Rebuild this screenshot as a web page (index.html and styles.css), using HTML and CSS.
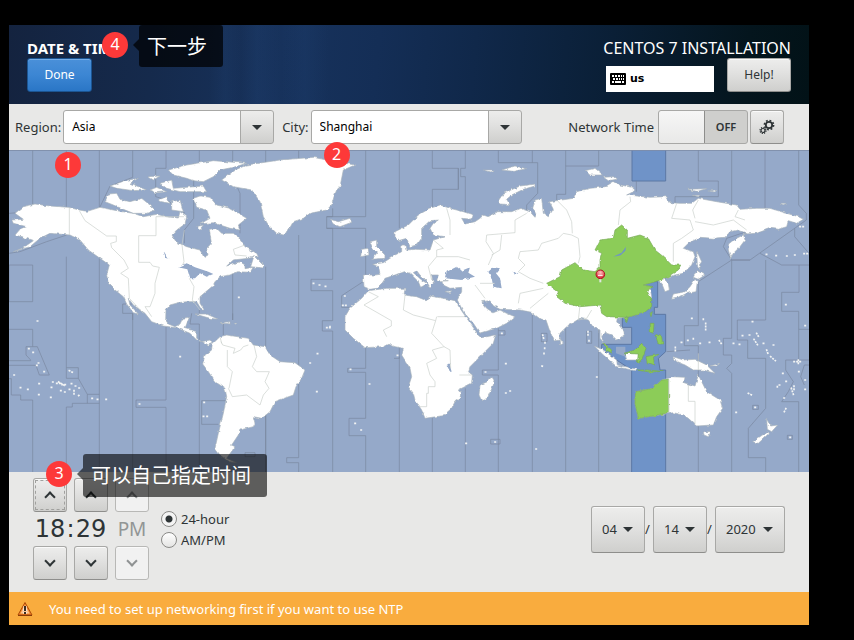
FILE: index.html
```html
<!DOCTYPE html>
<html lang="en">
<head>
<meta charset="utf-8">
<meta name="viewport" content="width=device-width, initial-scale=1">
<title>Date &amp; Time</title>
<link rel="stylesheet" href="styles.css">
</head>
<body>
<main class="installer">
  <header class="header">
    <div class="header-side">
      <h1 class="title">DATE &amp; TIME</h1>
      <button class="btn btn-primary" type="button">Done</button>
    </div>
    <div class="header-side header-right">
      <p class="product">CENTOS 7 INSTALLATION</p>
      <div class="header-actions">
        <div class="keyboard">
          <svg class="keyboard-icon" viewBox="0 0 16 12" aria-hidden="true">
            <rect width="16" height="12" rx="1"/>
            <path d="M2 2h2v2H2zM5 2h2v2H5zM8 2h2v2H8zM11 2h1v2h-1zM13 2h1v2h-1zM3 5h2v2H3zM6 5h2v2H6zM9 5h1v2H9zM11 5h1v2h-1zM13 5h1v2h-1zM2 8h2v2H2zM5 8h6v2H5zM12 8h2v2h-2z" fill="#fff"/>
          </svg>
          <span>us</span>
        </div>
        <button class="btn" type="button">Help!</button>
      </div>
    </div>
    <div class="hint hint-next"><span class="badge">4</span><span class="tip">下一步</span></div>
  </header>

  <section class="toolbar">
    <label for="region">Region:</label>
    <div class="combo">
      <select id="region"><option>Asia</option></select>
      <span class="badge badge-region">1</span>
    </div>
    <label for="city">City:</label>
    <div class="combo">
      <select id="city"><option>Shanghai</option></select>
      <span class="badge badge-city">2</span>
    </div>
    <label class="network-label" for="ntp">Network Time</label>
    <div class="switch"><input id="ntp" type="checkbox" role="switch"><span>OFF</span></div>
    <button class="btn btn-square" type="button" aria-label="Configure NTP">
      <svg viewBox="0 0 16 16" width="16" height="16" aria-hidden="true" fill="none" stroke="#2e3436">
        <circle cx="10" cy="6" r="3.2" stroke-width="1.8"/>
        <circle cx="10" cy="6" r="4.6" stroke-width="1.6" stroke-dasharray="1.8 1.8"/>
        <circle cx="4" cy="11.500" r="2" stroke-width="1.2"/>
        <circle cx="4" cy="11.500" r="3" stroke-width="1.2" stroke-dasharray="1.2 1.150"/>
      </svg>
    </button>
  </section>

  <svg class="map" viewBox="27 0 2400 966" role="img" aria-label="Time zone map">
    <defs>
      <filter id="coast" filterUnits="userSpaceOnUse" x="0" y="0" width="2460" height="966" color-interpolation-filters="sRGB">
        <feTurbulence type="fractalNoise" baseFrequency="0.07" numOctaves="2" seed="4"/>
        <feDisplacementMap in="SourceGraphic" scale="9" xChannelSelector="R" yChannelSelector="G"/>
      </filter>
      <radialGradient id="pin" cx=".5" cy=".3" r=".6"><stop offset="0" stop-color="#ffc0c0"/><stop offset="1" stop-color="#dd3440"/></radialGradient>
    </defs>
    <rect x="27" width="2400" height="966" fill="#95a9c9"/>

    <!-- highlighted zone -->
    <g fill="#6f93c8" stroke="#5d78a4" stroke-width="3">
      <path d="M1896 -5H1997V93H1896Z"/>
      <path d="M1997 970V660H1980L1975 625 1997 605V493H1963V472H1973V395H1900L1867 500V532H1895V583H1805V600L1895 660V970Z"/>
    </g>
    <path d="M1848 610V590H1876V620Z" fill="#95a9c9"/>

    <!-- zone boundaries -->
    <g class="zones">
      <path d="M98 0V185L27 190M27 310L60 305 140 275 200 255M199 0V255M298 0V175L330 108 398 82V0M498 0V55H467V140L500 150 555 190M598 0V60M581 40V205L553 240V280M698 0V45M698 80L720 130V250M797 0V45M698 370V510M797 350V966M896 0V30M896 255V923H860V938H896V966M998 175V200H980V235H998V388H933V422H998V512H967V543H998V966"/>
      <path d="M98 345H27V455H98ZM27 538H98V590H78V615L92 630V632H27M27 646H108L118 675H148L112 590H98M27 686H34V735H62V750H98V966M199 320V653H235V685L262 733H298V325M199 653V685H235M262 733V760H217V771H199V966M298 733V966M262 760H298M398 462H368V490H398V966M398 490V510M498 530V750H408V772H498V966M598 522V570M598 522L570 522 575 490M598 490V480M598 575V966M605 752H680M605 752V823H655M698 510V490M670 520V555M735 908H765V920H735ZM797 760V966"/>
      <path d="M1097 0V200H980M1097 235H980M1097 235V390L1025 437V472H1060M1198 0V235M1297 0V55H1375V118H1297V175M1396 0V55H1382V80H1396V205M1375 55V118M1495 0V38H1613V130L1580 165V190M1597 0V38M1697 0V48H1796V0M1697 48V133H1670V150M1909 93V125M2095 0V93H2155V140H2025V160M2195 0V165M2295 0V180M2396 0V165L2419 190V210L2250 330H2195L2170 290 2180 265 2240 245M2384 235V260L2427 310M2280 310L2345 345H2427M2397 345V427H2345V484H2396V538H2427M2250 330L2195 330 2095 395 2095 505"/>
      <path d="M1097 590V655H1043V667H1097V805H1047V857H1097V966M1198 590V625H1182M1198 620V966M1297 800V966M1396 715V966M1495 535V555H1515V542H1495M1495 555V660H1447V675H1495V966M1472 868H1500V882H1472ZM1597 480V966M1624 550H1641V575H1624ZM1697 530V966M1760 544H1775V580H1760ZM1796 530V966M2095 505V527H2053V587H2095V966M2195 330V565H2170V615H2195V640L2180 655 2195 670V966M2297 330V510H2212V570H2243V625H2297V775L2245 835V923H2297V966M2396 538V630H2357V660L2380 695 2365 725 2345 755H2396V966M2396 630L2427 630M2427 645H2413L2402 680 2413 705M2258 766H2275V778H2258ZM2362 856H2377V868H2362ZM2000 605 2070 600"/>
    </g>

    <!-- land -->
    <g class="land" filter="url(#coast)">
      <!-- North and Central America -->
      <path d="M105 162L150 168 205 172 238 180 262 184 300 172 355 183 400 190 430 200 470 193 500 200 535 204 540 185 560 200 555 222 530 240 516 255 528 275 560 290 600 300 612 322 624 315 620 295 634 280 632 262 628 238 650 235 665 250 700 250 715 262 735 290 770 310 775 320 745 325 700 330 680 348 720 335 735 345 735 356 760 352 750 367 710 365 690 375 660 380 645 395 638 408 612 430 600 440 600 460 613 480 605 480 590 455 560 455 535 458 510 465 498 480 497 510 505 522 525 530 540 522 548 505 568 502 560 522 555 535 590 545 590 565 605 575 630 570 637 580 625 585 610 577 590 570 570 550 530 533 490 528 455 515 435 490 400 465 385 445 390 465 415 492 400 488 380 462 370 440 345 420 325 400 320 375 328 345 300 325 265 300 240 270 210 255 150 250 120 265 90 290 40 305 70 293 100 272 70 262 45 255 60 238 80 230 40 220 35 210 70 208 45 190 70 170Z"/>
      <!-- Arctic islands -->
      <path d="M330 108L375 92 415 85 390 100 440 120 400 122 350 115ZM315 155L325 132 350 130 360 148 390 155 425 145 450 165 465 180 440 190 400 190 370 178 340 165ZM445 80L480 78 460 90ZM450 120L470 112 500 125 470 128ZM505 60L560 45 640 32 740 40 700 52 660 60 640 80 610 95 580 92 560 85 520 75ZM480 100L515 90 520 115 610 108 620 125 540 125 500 115ZM475 150L500 140 510 160 485 155ZM515 155L540 150 550 185 515 180ZM580 145L600 138 630 142 650 165 690 175 740 205 715 225 720 240 690 235 640 218 600 222 630 205 620 180 590 172ZM590 230L610 225 600 238ZM752 350L762 318 792 348 790 354Z"/>
      <!-- Greenland and Iceland -->
      <path d="M665 90L705 60 740 45 840 30 940 22 980 30 1065 45 1030 60 1020 110 1010 120 1002 140 995 165 980 180 930 190 910 205 880 215 860 250 850 255 830 250 805 225 790 200 780 155 755 120 700 110ZM990 208L1015 215 1050 205 1055 217 1020 230 1000 222Z"/>
      <!-- South America -->
      <path d="M637 582L660 560 680 555 745 565 760 585 795 590 810 615 840 635 885 638 915 660 905 685 888 710 880 735 825 755 810 785 785 805 760 800 765 820 760 830 720 840 715 855 695 885 705 890 680 925 710 938 685 935 660 915 645 895 655 850 670 790 680 740 675 715 645 695 625 665 608 642 615 615 635 600Z"/>
      <path d="M585 492L620 492 655 508 630 505ZM660 518L690 515 690 522ZM703 520L710 520 708 524Z"/>
      <!-- Africa and Madagascar -->
      <path d="M1215 415L1212 435 1250 440 1280 452 1290 438 1330 445 1365 452 1390 490 1415 525 1435 555 1440 564 1487 555 1480 580 1450 610 1410 650 1405 665 1417 675 1415 700 1375 720 1382 730 1380 745 1365 755 1355 775 1330 797 1275 805 1265 780 1245 750 1240 730 1225 710 1235 680 1230 655 1205 615 1210 595 1185 590 1165 582 1150 590 1095 593 1060 565 1035 540 1035 500 1050 475 1085 445 1105 422 1160 415ZM1475 680L1482 690 1480 705 1462 745 1445 752 1437 735 1440 705 1462 695Z"/>
      <!-- Eurasia -->
      <path d="M1185 245L1225 225 1255 195 1290 175 1320 165 1350 175 1390 185 1420 195 1415 208 1385 205 1395 222 1425 215 1440 205 1450 195 1465 200 1490 185 1535 185 1560 175 1590 185 1605 202 1610 190 1598 175 1605 150 1625 145 1630 190 1645 200 1660 178 1648 155 1685 150 1720 145 1730 125 1770 115 1815 110 1840 95 1860 105 1900 112 1900 125 1880 135 1950 142 2000 140 2010 158 2040 160 2075 160 2095 145 2150 155 2210 165 2220 178 2270 175 2310 175 2360 190 2395 200 2410 208 2390 220 2365 212 2360 230 2335 238 2310 235 2270 250 2230 252 2235 270 2220 290 2200 310 2192 325 2185 300 2185 285 2210 265 2240 250 2215 240 2190 245 2175 262 2140 265 2100 262 2065 280 2050 295 2080 305 2085 320 2075 345 2050 370 2025 375 1990 385 2005 400 2008 420 1995 425 1985 400 1975 390 1930 405 1950 410 1955 440 1950 470 1930 490 1885 500 1852 505 1850 515 1872 545 1873 555 1850 570 1835 555 1815 548 1805 560 1815 585 1835 605 1820 587 1800 565 1800 540 1780 532 1765 510 1740 505 1700 530 1680 550 1678 570 1663 573 1650 545 1638 510 1618 505 1595 487 1560 480 1500 478 1480 467 1470 452 1445 455 1460 475 1480 488 1500 480 1520 490 1545 500 1520 520 1490 535 1440 550 1420 520 1390 485 1372 450 1385 425 1385 412 1350 415 1330 405 1325 393 1345 392 1310 392 1315 375 1295 375 1300 400 1290 412 1280 395 1260 375 1250 362 1240 368 1265 390 1280 400 1275 405 1262 412 1255 395 1230 370 1210 365 1185 375 1155 385 1145 400 1130 415 1110 418 1092 410 1090 375 1125 375 1140 373 1135 350 1118 343 1150 338 1185 315 1205 305 1205 285 1215 285 1218 300 1250 298 1290 300 1300 270 1335 260 1300 255 1290 235 1300 220 1315 210 1290 212 1265 235 1265 265 1250 285 1230 290 1220 265 1195 272 1185 262Z"/>
      <!-- Atlantic and Arctic islands of Eurasia -->
      <path d="M1110 275L1130 270 1130 290 1155 315 1155 325 1115 328 1130 310 1118 295ZM1085 298L1105 295 1107 315 1082 320ZM1493 155L1510 130 1560 108 1605 102 1605 108 1570 118 1535 135 1520 148 1530 164 1500 162ZM1450 60L1480 60 1470 66ZM1505 60L1545 48 1580 56 1540 64ZM1755 62L1785 55 1810 75 1770 75ZM1810 82L1840 80 1850 88 1825 92ZM2060 118L2120 116 2090 124ZM2125 122L2150 122 2140 126ZM2080 136L2100 136 2095 140ZM2340 160L2360 160 2350 164ZM1335 425L1355 422 1350 428Z"/>
      <!-- Japan, Sakhalin, Sri Lanka -->
      <path d="M2090 302L2105 335 2098 345 2100 360 2092 345ZM2085 370L2095 362 2115 375 2095 388 2080 382ZM2085 388L2092 395 2088 425 2060 430 2040 440 2015 445 2020 432 2055 425 2070 410ZM1680 565L1690 580 1682 585Z"/>
      <!-- Sumatra, Java, Borneo, New Guinea -->
      <path d="M1783 588L1810 600 1850 630 1852 645 1910 658 1905 662 1850 650 1810 615ZM1875 610L1915 610 1915 630 1880 630ZM2020 620L2050 630 2085 628 2120 645 2145 670 2110 660 2080 660 2055 645 2030 635ZM2130 648L2160 640 2150 648Z"/>
      <!-- Australia, Tasmania, New Zealand -->
      <path d="M1907 725L1960 715 1985 690 2005 685 2015 680 2055 682 2052 698 2085 708 2095 675 2110 705 2120 725 2160 750 2168 775 2150 800 2140 825 2090 828 2065 805 2050 795 2020 788 1960 798 1915 805 1905 760ZM2110 845L2133 845 2125 860 2112 855ZM2300 808L2312 828 2333 825 2315 845 2302 838ZM2302 845L2305 852 2275 880 2258 875Z"/>
    </g>

    <!-- inland waters -->
    <g fill="#95a9c9" filter="url(#coast)">
      <path d="M535 352L560 340 585 352 625 365 640 372 620 380 600 370 585 385 570 385 562 358ZM490 302L505 325 498 325ZM1335 385L1340 365 1370 350 1385 362 1410 352 1405 368 1425 380 1385 390ZM1465 365L1480 352 1500 355 1488 370 1500 385 1505 415 1480 410 1475 385ZM1340 645L1350 665 1355 665 1348 640ZM1540 365L1555 370 1545 375Z"/>
    </g>

    <!-- green zone -->
    <g class="green" filter="url(#coast)">
      <path d="M1640 400L1680 380 1685 360 1725 338 1750 360 1785 365 1800 350 1800 330 1805 310 1785 300 1800 270 1840 265 1845 240 1865 225 1882 240 1882 265 1920 255 1945 265 1965 300 1990 320 2015 345 2042 345 2035 360 1995 385 1965 395 1930 405 1960 410 1940 420 1955 450 1955 470 1930 490 1880 502 1820 500 1805 490 1800 465 1740 470 1695 460 1670 440 1675 425Z"/>
      <path d="M1907 725L1960 715 1985 690 2006 688V788L1960 798 1915 805 1905 760ZM1872 610L1905 600 1925 580 1938 595 1925 630 1912 638 1915 612ZM1812 580L1835 600 1838 610 1818 600ZM1948 520L1962 520 1960 550 1948 545ZM1965 552L1985 560 1988 582 1975 582ZM1938 620L1980 612 1960 625 1965 645 1950 640 1942 642ZM1910 660L1940 660 1990 664 1950 666ZM1950 490L1957 485 1953 500ZM1870 508L1885 502 1880 518Z"/>
    </g>
    <path d="M1840 320L1865 308 1878 290 1876 302 1862 316Z" fill="#6f93c8"/>

    <!-- inland boundaries -->
    <g class="borders">
      <path d="M208 173V255M238 182L255 212 320 258H349V275L332 280 335 293 372 330 385 355 362 370 385 385 388 445 430 490M552 200H468V257H416V337H450L458 348 478 352 465 400V430L450 470 435 470 455 500M553 240L546 285 552 335 548 345M568 385L582 410 577 450 600 480M735 285L700 298 705 315 740 318M663 575L668 585 705 595 700 610 722 600 730 590 745 585M682 600V650L697 665 687 715M685 715L697 740 740 735 780 765 790 735 807 715 795 695 808 665H770L757 650 770 620 762 585M660 560L665 580"/>
      <path d="M1105 425L1135 440 1092 465 1174 512V528L1150 540 1160 560M1215 435L1210 480 1240 495 1307 512 1295 550 1332 590 1297 600 1310 625 1280 640 1290 675 1305 695V710H1285V730H1280V770H1260M1312 500H1395M1332 590L1350 600 1352 655M1307 512L1310 500M1378 675H1415M1425 405L1455 445M1440 400L1485 400M1310 300V320L1285 350 1295 390M1310 320L1375 320 1410 330M1300 270L1330 295 1310 300M1340 175L1350 210 1350 255M1580 190L1545 210V248L1460 255 1458 275 1480 310 1465 345M1505 255L1500 300 1475 315M1560 305L1615 300 1625 280 1675 265 1690 250 1715 255 1735 265 1740 320 1735 340M1560 305L1555 325 1575 345 1555 365 1590 385 1630 400M1555 460L1560 430 1630 415M1590 475L1620 450 1645 430M1670 150L1700 180 1715 215 1717 250M1890 140L1892 155 1860 180 1855 225M2030 160L2015 205 2070 210 2080 240 2045 265 2020 280 2020 335M2095 150L2078 180 2085 205M2085 215L2140 225 2200 210 2240 240M2215 180L2205 200 2235 210M1740 465L1735 510 1760 505 1775 480M2006 688V788M2065 705V754H2085V825M2095 610V660"/>
    </g>

    <!-- small islands -->
    <path class="specks" d="M86 596h1M99 607h1M115 639h1M110 646h1M132 665h1M42 675h4M61 713h1M83 718h1M117 701h4M116 734h1M152 742h1M208 662l12 6M154 712h4M158 696l8 0M170 700l14 0M176 696l20 12M186 704h16M182 722h1M194 726h1M208 718h1M214 701h1M226 708h1M222 722v12M237 714h1M236 737l6 -6M276 745h1M292 748h1M318 748h1M418 762h1M540 620h1M612 757h4M610 799h1M621 799h1M112 513h1M716 442h1M930 639h1M952 611h1M950 725h4M940 400h1M958 405h1M976 409h1M980 533h10M990 530v6M1034 438h1M1028 466h18M1192 616h1M1051 658h1M1108 702h1M1065 820h1M1083 840h1M1398 880h1M1485 876h1M1456 666h1M1517 641h1M1517 729h1M1530 723h1M1505 550h1M1628 555l4 14M1635 578v8M1634 594v8M1632 610v8M1626 648l8 3M1764 545v12M1767 572v8M1608 897h5M1790 681h1M2026 592v12M2044 577h1M2063 571h8M2080 566v8M2075 505h1M2110 507v8M2117 520v20M2100 580h4M2128 577h6M2158 572l8 12M2200 580h1M2218 583h1M2257 515h1M2227 557h1M2248 555h4M2270 550l8 14M2262 568l14 22M2290 580h1M2320 585h8M2300 600l5 14M2312 620l14 12M2382 635h24M2395 630v10M2396 665l6 0M2348 670h6M2332 710v8M2338 705h1M2358 694h1M2352 744h1M2382 708v15M2374 715l6 18M2415 690h1M2415 718h1M2353 785l6 -12M2208 787h1M2265 772h1M2370 862h1M2357 464h9M2415 527h1M2299 313h4M2328 317h4M2360 318h4M2384 315h6M2412 311h12M2245 730l10 5M2400 230h12"/>

    <!-- location pin -->
    <path d="M1801 385V397" stroke="#dfe5df" stroke-width="6"/>
    <circle cx="1801" cy="373" r="13" fill="url(#pin)" stroke="#ab1824" stroke-width="3"/>
    <path d="M1794 376h14" stroke="#fff" stroke-width="3"/>
    <path d="M27 1H2427" stroke="#7d8ca8" stroke-width="3"/>
  </svg>

  <section class="panel">
    <div class="clock">
      <button class="btn btn-square btn-focus" type="button" aria-label="Hour up"><i class="chev chev-up"></i></button>
      <button class="btn btn-square col-min" type="button" aria-label="Minute up"><i class="chev chev-up"></i></button>
      <button class="btn btn-square col-ampm" type="button" disabled aria-label="AM/PM up"><i class="chev chev-up"></i></button>
      <span class="digits">18</span>
      <span class="digits">:</span>
      <span class="digits">29</span>
      <span class="ampm">PM</span>
      <button class="btn btn-square" type="button" aria-label="Hour down"><i class="chev"></i></button>
      <button class="btn btn-square col-min" type="button" aria-label="Minute down"><i class="chev"></i></button>
      <button class="btn btn-square col-ampm" type="button" disabled aria-label="AM/PM down"><i class="chev"></i></button>
      <div class="hint hint-time"><span class="badge">3</span><span class="tip">可以自己指定时间</span></div>
    </div>
    <div class="formats">
      <label><input type="radio" name="format" checked>24-hour</label>
      <label><input type="radio" name="format">AM/PM</label>
    </div>
    <div class="date">
      <div class="pick"><select aria-label="Month"><option>04</option></select></div>
      <span>/</span>
      <div class="pick"><select aria-label="Day"><option>14</option></select></div>
      <span>/</span>
      <div class="pick pick-year"><select aria-label="Year"><option>2020</option></select></div>
    </div>
  </section>

  <footer class="warning">
    <svg viewBox="0 0 16 16" width="16" height="16" aria-hidden="true">
      <path d="M8 1.500L15 14H1Z" fill="#f68a2c" stroke="#ad4a08" stroke-linejoin="round"/>
      <path d="M1 14.500H15" stroke="#8a3b05"/>
      <path d="M8 4L12.500 12.500H3.500Z" fill="#fbc694"/>
      <path d="M8 5V10M8 11V13" stroke="#fff" stroke-width="3"/>
      <path d="M8 5V10M8 11V13" stroke="#3a2c20" stroke-width="2"/>
    </svg>
    <span>You need to set up networking first if you want to use NTP</span>
  </footer>
</main>
</body>
</html>
```
FILE: styles.css
```css
* { box-sizing: border-box; }

body {
  margin: 0;
  background: #000;
  color: #2e3436;
  font: 13px/20px "Noto Sans", "Noto Sans CJK SC", sans-serif;
}

button, select, input { font: inherit; color: inherit; margin: 0; }

.installer {
  margin: 25px 45px 15px 9px;
  background: #e8e8e7;
}

/* Header */
.header {
  position: relative;
  display: flex;
  justify-content: space-between;
  padding: 13px 18px 12px;
  color: #fff;
  background:
    linear-gradient(90deg, transparent 25%, rgba(45, 90, 150, .1) 27%, transparent 29%, rgba(45, 90, 150, .12) 31%, transparent 34%, rgba(45, 90, 150, .1) 37%, transparent 40%),
    linear-gradient(95deg, #14233f 0%, #152a4c 18%, #17325c 34%, #142e56 46%, #10284a 58%, #0a1f36 75%, #04151d 92%, #021217 100%);
}

.header-side { display: flex; flex-direction: column; align-items: flex-start; }
.header-right { align-items: flex-end; }
.title, .product { margin: 0; line-height: 20px; }
.title { font-size: 15px; font-weight: 700; }
.product { font-size: 16px; }
.header-actions { display: flex; align-items: flex-end; gap: 13px; }

.keyboard {
  display: flex;
  align-items: center;
  gap: 4px;
  width: 108px;
  height: 26px;
  padding: 0 4px;
  background: #fff;
  color: #000;
  font: 700 11px/16px "DejaVu Sans", sans-serif;
}
.keyboard-icon { width: 16px; height: 12px; }

/* Buttons */
.btn {
  display: inline-flex;
  align-items: center;
  justify-content: center;
  width: 64px;
  height: 34px;
  padding: 0;
  border: 1px solid #a8a8a6;
  border-bottom-color: #8e8e8c;
  border-radius: 3px;
  background: linear-gradient(#ededec, #e2e2e1 40%, #cfcfcd);
  box-shadow: inset 0 1px #fafafa;
  color: #2e3436;
  font-size: 12px;
}
.btn-primary {
  width: 65px;
  border-color: #1c5592;
  background: linear-gradient(#4a90d9, #3c86d3 50%, #2a76c6);
  box-shadow: inset 0 1px #76ace6;
  color: #fff;
}
.btn-square { position: relative; width: 34px; }
.btn:disabled { border-color: #b8b8b6; background: #f1f1f1; color: #8f9293; }
.btn-focus::after {
  content: "";
  position: absolute;
  inset: 1px;
  border: 1px dashed #a0a09e;
}

/* Toolbar */
.toolbar {
  display: flex;
  align-items: center;
  padding: 6px 25px 6px 6px;
}
.combo { position: relative; flex: 0 1 211px; margin: 0 8px 0 2px; }
.combo select {
  display: block;
  width: 100%;
  height: 34px;
  padding: 0 40px 0 8px;
  appearance: none;
  border: 1px solid #a8a8a6;
  border-radius: 3px;
  background:
    linear-gradient(#a8a8a6, #a8a8a6) right 32px top / 1px 100% no-repeat,
    linear-gradient(#ededec, #e2e2e1 40%, #cfcfcd) right top / 32px 100% no-repeat,
    #fff;
  color: #000;
  font-size: 12px;
}
.combo::after, .pick::after {
  content: "";
  position: absolute;
  top: 50%;
  right: 12px;
  margin-top: -2px;
  border: 5px solid transparent;
  border-top-color: #2e3436;
  border-bottom: 0;
  pointer-events: none;
}
.network-label { margin: 0 4px 0 auto; }
.switch {
  display: grid;
  grid-template-columns: 46px 44px;
  align-items: center;
  margin-right: 2px;
}
.switch input {
  grid-area: 1 / 1 / 2 / 3;
  height: 34px;
  appearance: none;
  border: 1px solid #a8a8a6;
  border-radius: 3px;
  background:
    linear-gradient(#8e8e8c, #8e8e8c) left 45px top / 1px 100% no-repeat,
    linear-gradient(#f6f6f6, #e9e9e8) left top / 45px 100% no-repeat,
    #cfcfcd;
}
.switch span {
  grid-area: 1 / 2;
  text-align: center;
  font-size: 11px;
  font-weight: 600;
  pointer-events: none;
}

/* Map */
.map { display: block; width: 100%; height: auto; }
.zones { fill: none; stroke: #78879f; stroke-width: 2; }
.land { fill: #fff; stroke: #a9b4bb; stroke-width: 2; }
.green { fill: #8ccc58; stroke: #77a957; stroke-width: 2; }
.borders { fill: none; stroke: #c9cfca; stroke-width: 2; stroke-linejoin: round; }
.specks { fill: none; stroke: #f2f4f4; stroke-width: 5; stroke-linecap: square; stroke-dasharray: 1 8; }

/* Time and date */
.panel {
  display: flex;
  align-items: center;
  padding: 6px 24px 12px;
}
.clock {
  position: relative;
  display: grid;
  grid-template-columns: 34px 7px 34px 7px 34px;
  grid-template-rows: 34px 34px 34px;
  align-items: center;
  justify-items: center;
}
.col-min { grid-column: 3; }
.col-ampm { grid-column: 5; }
.digits { font: 24px/34px "DejaVu Sans", sans-serif; }
.ampm { grid-column: 5; color: #929595; font-size: 19px; }
.chev {
  width: 8px;
  height: 8px;
  margin-bottom: 4px;
  border: solid currentColor;
  border-width: 0 2px 2px 0;
  transform: rotate(45deg);
}
.chev-up { margin: 4px 0 0; transform: rotate(225deg); }

.formats { margin-left: 12px; }
.formats label { display: flex; align-items: center; gap: 4px; height: 21px; }
.formats input {
  width: 16px;
  height: 16px;
  appearance: none;
  border: 1px solid #8a8a88;
  border-radius: 50%;
  background: linear-gradient(#fff, #e4e4e3);
}
.formats input:checked { background: radial-gradient(circle, #2e3436 0 3px, #f4f4f4 4px); }

.date { display: flex; align-items: center; margin-left: auto; }
.date span { width: 8px; }
.pick { position: relative; width: 54px; }
.pick-year { width: 70px; }
.pick select {
  display: block;
  width: 100%;
  height: 47px;
  padding: 0 0 0 10px;
  appearance: none;
  border: 1px solid #a8a8a6;
  border-bottom-color: #8e8e8c;
  border-radius: 3px;
  background: linear-gradient(#ededec, #e0e0df 50%, #cfcfcd);
  box-shadow: inset 0 1px #fafafa;
}

/* Warning bar */
.warning {
  display: flex;
  align-items: center;
  gap: 16px;
  height: 33px;
  padding: 0 8px;
  background: #f9ac3e;
  color: #fff;
}

/* Numbered hints */
.hint { position: absolute; z-index: 2; display: flex; align-items: flex-start; }
.hint-next { left: 93px; top: 0; }
.hint-time { left: 13px; top: -24px; }
.badge {
  flex: none;
  width: 26px;
  height: 26px;
  border-radius: 50%;
  background: #fd3939;
  color: #fff;
  font-size: 16px;
  line-height: 24px;
  text-align: center;
}
.hint .badge { margin-top: 7px; }
.badge-region, .badge-city { position: absolute; z-index: 2; }
.badge-region { left: -8px; top: 42px; }
.badge-city { left: 13px; top: 32px; }
.tip {
  position: relative;
  height: 43px;
  margin-left: 11px;
  padding: 0 16px 0 8px;
  border-radius: 3px;
  background: rgba(0, 0, 0, .6);
  color: #fff;
  font: 20px/42px "Noto Sans CJK SC", sans-serif;
  white-space: nowrap;
}
.tip::before {
  content: "";
  position: absolute;
  left: -6px;
  top: 14px;
  border: 6px solid transparent;
  border-right-color: rgba(0, 0, 0, .6);
  border-left: 0;
}
.hint-next .tip { height: 42px; background: rgba(0, 0, 0, .72); }
.hint-next .tip::before { border-right-color: rgba(0, 0, 0, .72); }
```
